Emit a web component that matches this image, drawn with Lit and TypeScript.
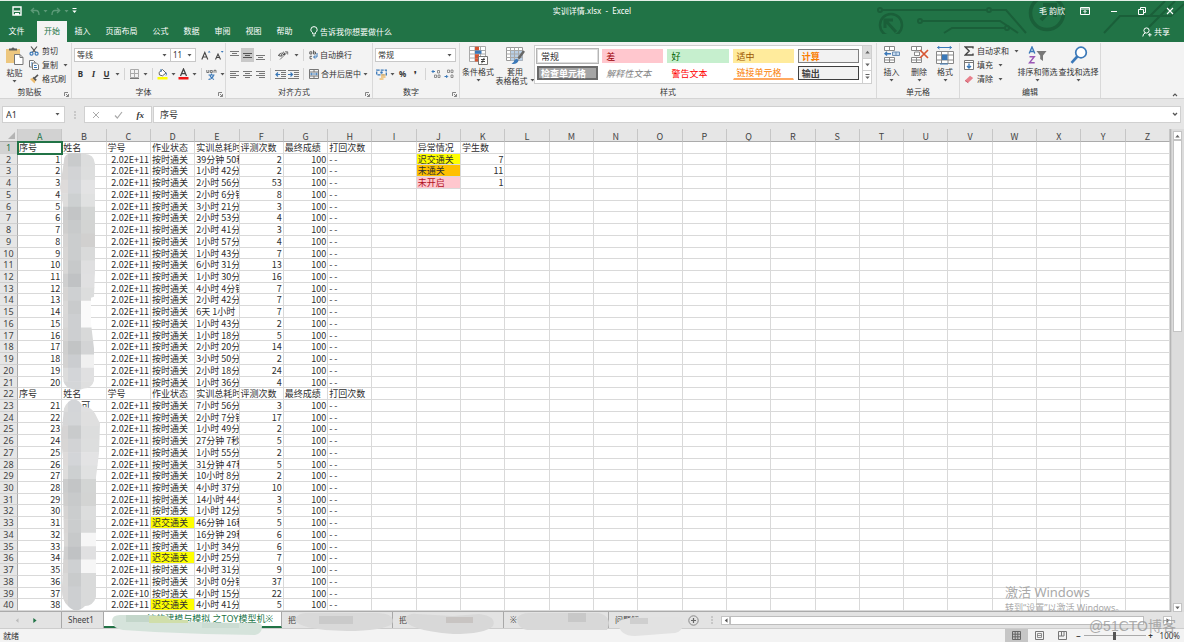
import { LitElement, html, css, svg, nothing, TemplateResult } from "lit";
import { customElement } from "lit/decorators.js";
import { classMap } from "lit/directives/class-map.js";
import { styleMap } from "lit/directives/style-map.js";

const icon = (w: number, h: number, body: unknown) =>
  html`<svg width=${w} height=${h} viewBox="0 0 ${w} ${h}" fill="none" aria-hidden="true">${body}</svg>`;

const caret = html`<svg class="caret" width="5" height="3" viewBox="0 0 5 3" aria-hidden="true"><path d="M.5 0h4l-2 2.4z" fill="#555" /></svg>`;

const lines = (rows: number[][], color = "#777") =>
  svg`${rows.map(([x, y, w]) => svg`<path d="M${x} ${y}.5h${w}" stroke=${color}/>`)}`;

const I = {
  save: icon(10, 10, svg`<path d="M1 1h8v8H1z" stroke="#fff" stroke-width="1.4"/><path d="M2 5.2h6" stroke="#fff" stroke-width="1.4"/><path d="M3 7h4v2H3z" fill="#fff"/>`),
  undo: icon(10, 9, svg`<path d="M4 1 1.3 3.5 4 6M1.5 3.5H6q3 0 3 4.5" stroke="#5c9a78" stroke-width="1.3"/>`),
  redo: icon(10, 9, svg`<path d="M6 1l2.700 2.500L6 6M8.500 3.500H4q-3 0-3 4.500" stroke="#5c9a78" stroke-width="1.3"/>`),
  more: icon(5, 6, svg`<path d="M.5.5h4" stroke="#fff"/><path d="M.3 2.500h4.400L2.500 5z" fill="#fff"/>`),
  display: icon(10, 8, svg`<path d="M.5.500h9v7h-9zM.5 2h9M5 6.500V3.500M3.500 5 5 3.500 6.500 5" stroke="#fff"/>`),
  min: icon(8, 8, svg`<path d="M1 4.500h6" stroke="#fff"/>`),
  restore: icon(8, 8, svg`<path d="M.5 2.500h5v5h-5zM2.500 2.500v-2h5v5h-2" stroke="#fff"/>`),
  close: icon(8, 8, svg`<path d="M1 1l6 6M7 1 1 7" stroke="#fff" stroke-width="1.1"/>`),
  bulb: icon(8, 11, svg`<path d="M2.700 8V6.700Q.8 5.500.8 3.800a3.200 3.200 0 0 1 6.400 0Q7.200 5.500 5.300 6.700V8zM2.800 9.800h2.400" stroke="#fff"/>`),
  person: icon(10, 10, svg`<circle cx="4.500" cy="3.500" r="2.600" stroke="#fff"/><path d="M.8 9.500q.2-3 2.600-3.600M6 7.800h3.600M7.800 6v3.600" stroke="#fff"/>`),
  paste: icon(19, 20, svg`<path d="M1 3h14v14H1z" fill="#edc77f"/><path d="M4 4.500V2.500h2.500a1.600 1.600 0 0 1 3 0H12v2z" fill="#5e5e5e"/><path d="M9.500 8.500h5.500l3 3v7h-8.500z" fill="#fff" stroke="#777"/><path d="M15 8.500v3h3" stroke="#777"/>`),
  cut: icon(10, 10, svg`<path d="M2 .5 6.800 6.600M8 .5 3.200 6.600" stroke="#555" stroke-width="1.200"/><circle cx="2.500" cy="7.700" r="1.500" stroke="#3a78b8" stroke-width="1.200"/><circle cx="7.600" cy="7.700" r="1.500" stroke="#3a78b8" stroke-width="1.200"/>`),
  copy: icon(10, 10, svg`<path d="M.5.500h4l1.500 1.500v5H.5z" fill="#fff" stroke="#777"/><path d="M3.500 3h4L9.500 5v4.500h-6z" fill="#fff" stroke="#777"/><path d="M2 3h1.500M2 5h1M5 5.500h2.500M5 7.500h3" stroke="#3a78b8"/>`),
  brush: icon(10, 10, svg`<path d="M1 5 4.500 3.500 7 6 5.500 9.500z" fill="#edbd70"/><path d="M5 4.500 9 .8M4.200 3.400l3 3" stroke="#555" stroke-width="1.700"/>`),
  grow: icon(10, 11, svg`<path d="M.8 9.500 3.800 2.500 6.800 9.500M1.900 7h3.800" stroke="#444" stroke-width="1.100"/><path d="M6.800 2.500 8.200.8 9.600 2.500z" fill="#3a78b8"/>`),
  shrink: icon(10, 11, svg`<path d="M1.500 9.500 4 4 6.500 9.500M2.500 7.500h3" stroke="#444" stroke-width="1.100"/><path d="M6.800 1 8.200 2.700 9.600 1z" fill="#3a78b8"/>`),
  border: icon(9, 10, svg`<path d="M.5.500h8v8h-8zM4.500.500v8M.5 4.500h8" stroke="#aaa"/><path d="M0 9.500h9" stroke="#777"/>`),
  fill: icon(11, 12, svg`<path d="M2 4.500 5.500 1.500 9 5 5.500 7.800 2.500 7z" fill="#fff" stroke="#666"/><path d="M4 1v3M9 4.500q1 2 0 3" stroke="#3a78b8"/><path d="M.5 9h10v2.500H.5z" fill="#ff0"/>`),
  color: icon(11, 12, svg`<path d="M2.500 8 5.500 1 8.500 8M3.500 5.700h4" stroke="#444" stroke-width="1.300"/><path d="M.5 9h10v2.500H.5z" fill="#f01414"/>`),
  wen: icon(11, 11, svg`<path d="M.8 1v2.500h2V1M4.300 1.500h2v2h-2zM8 3.800V1.300h2v2.500" stroke="#555" stroke-width=".8"/><path d="M5.500 4.500v1.500M2.500 6h6M4 6.500q1 3 4 4M7.500 6.500q-1 3-5 4" stroke="#3a78b8" stroke-width="1.100"/>`),
  top: icon(9, 9, lines([[0, 0, 9], [2, 2, 5], [0, 4, 9]])),
  middle: icon(9, 9, lines([[0, 2, 9], [2, 4, 5], [0, 6, 9]], "#555")),
  bottom: icon(9, 9, lines([[0, 4, 9], [2, 6, 5], [0, 8, 9]])),
  left: icon(9, 9, lines([[0, 1, 9], [0, 3, 6], [0, 5, 9], [0, 7, 6]])),
  center: icon(9, 9, lines([[0, 1, 9], [2, 3, 5], [0, 5, 9], [2, 7, 5]])),
  right: icon(9, 9, lines([[0, 1, 9], [3, 3, 6], [0, 5, 9], [3, 7, 6]])),
  orient: icon(11, 10, svg`<path d="M2 9.500 9.500 2M7 1.800h2.700v2.700" stroke="#777"/><path d="M1 4.500q2-2 3 0t-2 1.500-1-1.500M4 2.500l2 2.500q1.500-.5.500-2T4.800 2.800" stroke="#444"/>`),
  outdent: icon(11, 9, svg`${lines([[0, 0, 11], [6, 2, 5], [6, 4, 5], [6, 6, 5], [0, 8, 11]])}<path d="M5 4.500H1.500M3 2.500l-2 2 2 2" stroke="#3a78b8" stroke-width="1.200"/>`),
  indent: icon(11, 9, svg`${lines([[0, 0, 11], [6, 2, 5], [6, 4, 5], [6, 6, 5], [0, 8, 11]])}<path d="M0 4.500h4M2.500 2.500l2 2-2 2" stroke="#3a78b8" stroke-width="1.200"/>`),
  wrap: icon(9, 10, svg`<path d="M.8 4V1.800h2V4h-2M4.500.3V4h2V2h-2M3 6.300H1v2.500h2" stroke="#555" stroke-width=".9"/><path d="M8 3v4H4.800M6.200 5.300 4.600 7l1.600 1.700" stroke="#3a78b8"/>`),
  merge: icon(10, 10, svg`<path d="M.5.500h9v9h-9zM.5 3h9M.5 7h9M5 .5V3M5 7v2.500" stroke="#777"/><path d="M1.500 5h7M3 3.800 1.700 5 3 6.200M7 3.800 8.300 5 7 6.200" stroke="#3a78b8" stroke-width=".9"/>`),
  money: icon(11, 11, svg`<path d="M.7 1.200h9.600v4.600H.7z" stroke="#3a78b8" stroke-width="1.300" stroke-dasharray="3 1"/><circle cx="5.500" cy="3.500" r="1.200" fill="#3a78b8"/><path d="M5 6h4.500M5 8h4.500M3.500 10h4" stroke="#edbd70" stroke-width="1.500"/>`),
  decInc: icon(10, 10, svg`<path d="M4 2.500H1M2.500 1 1 2.500 2.500 4" stroke="#3a78b8"/><path d="M6.500 1.500h2v2.500h-2zM3.500 6h2v2.500h-2zM7 6h2v2.500H7z" stroke="#777" stroke-width=".8"/>`),
  decDec: icon(10, 10, svg`<path d="M.5 7.500h3M2.200 6l1.500 1.500L2.200 9" stroke="#3a78b8"/><path d="M3.500 1h2v2.500h-2zM7 1h2v2.500H7zM7 6h2v2.500H7z" stroke="#777" stroke-width=".8"/>`),
  cond: icon(20, 19, svg`<path d="M1.500.500h16v15h-16zM1.500 4.500h16M1.500 8h16M1.500 12h16M7 .5v15M12.500.5v15" fill="#fff" stroke="#aaa"/><path d="M7 .8h4v3.500H7zM7 8.200h4V12H7zM7 12.200h3v3.300H7z" fill="#d65532"/><path d="M7 4.600h6.500v3.200H7z" fill="#3a78b8"/><path d="M10.500 10.500h9v8h-9z" fill="#fff" stroke="#777"/><path d="M13 13.500h4M13 15.500h4M16.200 11.800l-2.500 5.500" stroke="#333" stroke-width=".9"/>`),
  format: icon(19, 19, svg`<path d="M.5 1.500h16v13H.5z" fill="#fff" stroke="#999"/><path d="M5 5h11.500v9.500H5z" fill="#b9cfe6"/><path d="M.5 4.500h16M.5 8h16M.5 11.500h16M4.500 1.500v13M8.500 1.500v13M12.500 1.500v13" stroke="#a9a9a9"/><path d="M18 5 12.500 12.500" stroke="#666" stroke-width="2.500"/><path d="M5.500 17.800Q8 17 8.500 14q2.500-2 4 .5Q11.500 18.500 5.500 17.800z" fill="#3a78b8"/>`),
  insert: icon(18, 19, svg`<path d="M1.500.500h10v4h-10zM6.500.500v4M1.500 11.500h10v5h-10zM1.500 14h10M6.500 11.500v5" fill="#fff" stroke="#888"/><path d="M9.500 6h7v3.500h-7zM13 6v3.500" fill="#c8dcf0" stroke="#6a8db3"/><path d="M8 7.700H2M4 5.800 2 7.700l2 1.900" stroke="#3a78b8" stroke-width="1.400"/>`),
  remove: icon(19, 19, svg`<path d="M1.500.500h10v4h-10zM6.500.500v4M1.500 11.500h10v5h-10zM1.500 14h10M6.500 11.500v5M4.500 6h5v3.500h-5z" fill="#fff" stroke="#888"/><path d="M10 4l8 8M18 4l-8 8" stroke="#d65532" stroke-width="1.700"/>`),
  cells: icon(18, 19, svg`<path d="M1.500 1.500h14M3.500 0 1.500 1.500l2 1.500M13.500 0l2 1.500-2 1.500" stroke="#3a78b8"/><path d="M.5 5.500h17v12H.5zM.5 9h17M.5 14h17M5.500 5.500v12M12 5.500v12" fill="#fff" stroke="#888"/><path d="M6 8.500h5.500v5.500H6z" fill="#3a78b8"/><path d="M4 18h8" stroke="#3a78b8"/>`),
  sum: icon(10, 10, svg`<path d="M9 2.500V1H1.200l4 4-4 4H9V7.500" stroke="#444" stroke-width="1.400"/>`),
  down: icon(10, 10, svg`<path d="M.5.500h9v9h-9zM.5 2.500h9" fill="#fff" stroke="#777"/><path d="M5 3.500v4.500M3 6l2 2 2-2" stroke="#3a78b8" stroke-width="1.400"/>`),
  eraser: icon(10, 9, svg`<path d="M1 5.500 6 .8 9.200 3 4.200 7.800z" fill="#e8808c"/><path d="M1 5.500l3.200 2.300" stroke="#c95c6c"/>`),
  sort: icon(20, 19, svg`<path d="M1.200 7.500 4 1 6.800 7.500M2 5.500h4" stroke="#3a78b8" stroke-width="1.400"/><path d="M1.500 10.800h4.800l-4.800 6h5.200" stroke="#9a57b5" stroke-width="1.400"/><path d="M8.500 5h10L15 9.500v5.500l-2.800-2V9.500z" fill="#777"/>`),
  search: icon(18, 19, svg`<circle cx="11" cy="6.500" r="5.300" fill="#fff" stroke="#3a78b8" stroke-width="1.700"/><path d="M7.300 10.500 1.500 16.800" stroke="#3a78b8" stroke-width="2.600"/>`),
  launcher: icon(5, 5, svg`<path d="M.5 4V.500H4M2 2l2.300 2.300M4.500 2v2.500H2" stroke="#777" stroke-width=".9"/>`),
  x: icon(8, 8, svg`<path d="M1 1l6 6M7 1 1 7" stroke="#aaa"/>`),
  check: icon(9, 8, svg`<path d="M1 4.500 3.300 7 8 1" stroke="#aaa" stroke-width="1.200"/>`),
  chevDown: icon(6, 5, svg`<path d="M1 1l2 2 2-2" stroke="#555" stroke-width="1.300"/>`),
  chevUp: icon(6, 5, svg`<path d="M1 4l2-2 2 2" stroke="#555" stroke-width="1.100"/>`),
  arrowUp: icon(5, 4, svg`<path d="M.3 3.500h4.400L2.500.800z" fill="#666"/>`),
  arrowDown: icon(5, 4, svg`<path d="M.3.500h4.400L2.500 3.200z" fill="#666"/>`),
  moreDown: icon(5, 6, svg`<path d="M.5.500h4" stroke="#666"/><path d="M.3 2.500h4.400L2.500 5z" fill="#666"/>`),
  arrowLeft: icon(4, 5, svg`<path d="M3.500.300v4.400L.8 2.500z" fill="#555"/>`),
  arrowRight: icon(4, 5, svg`<path d="M.5.300v4.400L3.200 2.500z" fill="#555"/>`),
  prevSheet: icon(4, 5, svg`<path d="M3.500.300v4.400L.8 2.500z" fill="#bbb"/>`),
  nextSheet: icon(4, 5, svg`<path d="M.3 0v5L3.600 2.500z" fill="#217346"/>`),
  dots: icon(2, 8, svg`<path d="M1 0v2M1 3v2M1 6v2" stroke="#aaa"/>`),
  add: icon(11, 11, svg`<circle cx="5.500" cy="5.500" r="4.700" stroke="#888"/><path d="M3 5.500h5M5.500 3v5" stroke="#666" stroke-width="1.200"/>`),
  normal: icon(9, 9, svg`<path d="M.5.500h8v8h-8zM.5 3.200h8M.5 5.800h8M3.200.5v8M5.800.5v8" stroke="#666"/>`),
  pageView: icon(9, 9, svg`<path d="M.5.500h8v8h-8z" stroke="#777"/><path d="M2.500 2.500h4v4h-4zM2.500 4.500h4" stroke="#777" stroke-width=".8"/>`),
  breakView: icon(9, 9, svg`<path d="M.5.500h8v8h-8zM3.500.500v4.500M6 .5v4.500M.5 5h5.500" stroke="#777"/>`),
};

const HEAD = ["序号", "姓名", "学号", "作业状态", "实训总耗时", "评测次数", "最终成绩", "打回次数"];
const RECORDS: [string, number][] = [
  ["39分钟 50秒", 2], ["1小时 42分钟", 2], ["2小时 56分钟", 53], ["2小时 6分钟", 8], ["3小时 21分钟", 3],
  ["2小时 53分钟", 4], ["2小时 41分钟", 3], ["1小时 57分钟", 4], ["1小时 43分钟", 7], ["6小时 31分钟", 13],
  ["1小时 30分钟", 16], ["4小时 4分钟", 7], ["2小时 42分钟", 7], ["6天 1小时", 7], ["1小时 43分钟", 2],
  ["1小时 18分钟", 5], ["2小时 20分钟", 14], ["3小时 50分钟", 2], ["2小时 18分钟", 24], ["1小时 36分钟", 4],
  ["7小时 56分钟", 3], ["2小时 7分钟", 17], ["1小时 49分钟", 2], ["27分钟 7秒", 5], ["1小时 55分钟", 2],
  ["31分钟 47秒", 5], ["10小时 8分钟", 2], ["4小时 37分钟", 10], ["14小时 44分钟", 3], ["1小时 12分钟", 5],
  ["46分钟 16秒", 5], ["16分钟 29秒", 6], ["1小时 34分钟", 6], ["2小时 25分钟", 7], ["4小时 31分钟", 9],
  ["3小时 0分钟", 37], ["4小时 15分钟", 22], ["4小时 41分钟", 5],
];
const LATE = new Set([31, 34, 38]);
const SUMMARY: Record<number, [string, string, string]> = {
  1: ["异常情况", "学生数", ""],
  2: ["迟交通关", "7", "late"],
  3: ["未通关", "11", "failed"],
  4: ["未开启", "1", "unopened"],
};
const COLUMNS = "ABCDEFGHIJKLMNOPQRSTUVWXYZ".split("");

type Cell = { text: string; cls?: string };

function rowCells(row: number): Cell[] {
  const cells: Cell[] = COLUMNS.map(() => ({ text: "" }));
  if (row === 1 || row === 22) {
    HEAD.forEach((text, i) => (cells[i] = { text }));
  } else {
    const n = row < 22 ? row - 1 : row - 2;
    const [time, tries] = RECORDS[n - 1];
    cells[0] = { text: String(n), cls: "num" };
    cells[1] = { text: n === 21 ? "\u3000\u3000可" : "" };
    cells[2] = { text: n === 37 ? "2.02E+10" : "2.02E+11", cls: "num" };
    cells[3] = LATE.has(n) ? { text: "迟交通关", cls: "late" } : { text: "按时通关" };
    cells[4] = { text: time };
    cells[5] = { text: String(tries), cls: "num" };
    cells[6] = { text: "100", cls: "num" };
    cells[7] = { text: "- -" };
  }
  const s = SUMMARY[row];
  if (s) {
    cells[9] = { text: s[0], cls: s[2] };
    cells[10] = { text: s[1], cls: row > 1 ? "num" : "" };
  }
  if (row === 1) cells[0].cls = "active";
  return cells;
}

/* Shade triples per mosaic row: left edge, middle, right */
const SHADES: string[][] = [
  ["#d6d4d4", "#c9cbcc", "#dcdddd"], ["#d8d6d5", "#d2d3d5", "#dddede"], ["#dedbda", "#d3d5d8", "#e3e3e4"],
  ["#dedddc", "#cdd0d1", "#e0e1e1"], ["#cbcccc", "#c3c5c6", "#d3d5d4"], ["#cfcecd", "#c8cacb", "#d3d4d3"],
  ["#d6d4d3", "#cbcdce", "#d1d0cf"], ["#d8d6d5", "#cbcdce", "#d9dada"], ["#d9d8d7", "#c7c9ca", "#dfdfe0"],
  ["#cfcfcf", "#c0c2c4", "#e0e0e1"], ["#d6d4d3", "#ced0d2", "#dcdddd"], ["#dad9d8", "#c9cbcc", "#fafafa"],
  ["#d9d8d8", "#cdcfd1", "#fafafa"], ["#d6d5d4", "#cdcfd1", "#d8d9d9"], ["#cfcfce", "#c2c4c5", "#d3d4d5"],
  ["#d3d2d1", "#cbcdd0", "#f0f0f0"], ["#dcdcdc", "#d3d5d8", "#e0e0e1"], ["#d6d6d7", "#d4d6d8", "#dfdfdf"],
];

@customElement("app-root")
export class AppRoot extends LitElement {
  static styles = css`
    :host { display: flex; flex-direction: column; height: 100vh; overflow: hidden; position: relative; background: #e6e6e6; color: #333;
      font-family: "Noto Sans", "Noto Sans CJK SC", sans-serif; font-size: 8px; line-height: 10px; }
    * { box-sizing: border-box; }
    svg { display: block; flex: none; }
    button, select, input { font: inherit; color: inherit; border: 0; margin: 0; padding: 0; background: none; border-radius: 0; }
    button, a { display: flex; align-items: center; justify-content: center; white-space: nowrap; text-decoration: none; color: inherit; flex: none; }
    .top { position: relative; background: #217346; color: #fff; border-top: 1px solid #e4efe8; flex: none; }
    .circuit { position: absolute; right: 0; top: 0; }
    .titlebar { position: relative; display: grid; grid-template-columns: 1fr auto 1fr; height: 20px; align-items: center; }
    .quick { display: flex; align-items: center; gap: 5px; padding-left: 12px; }
    .quick .save { margin-right: 3px; }
    .quick .caret { margin: 0 -2px; }
    .quick .caret path { fill: #5c9a78; }
    .window { display: flex; justify-content: flex-end; align-items: center; padding-right: 10px; gap: 20px; }
    .window .user { margin-right: -5px; }
    .tabs { position: relative; display: flex; height: 21px; align-items: stretch; }
    .tabs a { width: 31px; padding-bottom: 1px; }
    .tabs a.file { width: 37px; padding-right: 4px; }
    .tabs a.on { background: #f3f3f3; color: #217346; width: 30px; }
    .tabs a.wide { width: 47px; }
    .tabs nav { display: flex; }
    .tabs .tip { gap: 2px; margin-left: 10px; }
    .tabs .share { margin-left: auto; padding: 0 14px 0 0; gap: 2px; }

    .ribbon { display: flex; flex: none; height: 57px; background: #f3f3f3; border-bottom: 1px solid #d4d4d4; padding-top: 1px; }
    .group { display: flex; flex-direction: column; position: relative; flex: none; border-right: 1px solid #d9d9d9; }
    .group .body { display: flex; flex: 1; min-height: 0; padding-top: 1px; }
    .group .name { display: flex; flex: none; height: 12px; align-items: center; justify-content: center; padding-bottom: 1px; }
    .group .launch { position: absolute; right: 2px; bottom: 1px; }
    .g1 { width: 72px; } .g1 .name { padding-right: 12px; } .g2 { width: 154px; } .g2 .name { padding-right: 10px; } .g3 { width: 147px; } .g3 .name { padding-right: 10px; } .g4 { width: 87px; } .g4 .name { padding-right: 10px; }
    .g5 { width: 417px; } .g6 { width: 83px; } .g7 { width: 141px; }
    .big { flex-direction: column; justify-content: flex-start; line-height: 9px; padding-top: 2px; }
    .big svg { margin-bottom: 2px; }
    .big .caret { margin: 3px 0 0; }
    .big .pair { display: flex; align-items: center; gap: 2px; }
    .big .pair .caret { margin: 0; }
    .stack { display: flex; flex-direction: column; }
    .stack button { height: 14px; justify-content: flex-start; gap: 3px; }
    .stack .caret { margin-left: 2px; }
    .rows { display: flex; flex-direction: column; gap: 5px; padding: 4px 0 0 2px; }
    .line { display: flex; height: 14px; align-items: center; }
    .line button { height: 14px; min-width: 13px; }
    .line button.drop { min-width: 8px; }
    .line button.slant { min-width: 18px; }
    .line button.t { gap: 2px; min-width: 53px; justify-content: flex-start; padding-left: 2px; }
    .line button.on { background: #c9c9c9; }
    .line i { width: 1px; height: 12px; background: #d4d4d4; margin: 0 3px; }
    .pick { display: flex; align-items: center; position: relative; height: 14px; background: #fff; border: 1px solid #c8c8c8; }
    .pick select { appearance: none; width: 100%; height: 12px; padding: 0 2px; line-height: 12px; outline: 0; }
    .pick .caret { position: absolute; right: 3px; }
    .family { width: 97px; } .size { width: 25px; border-left: 0; margin-right: 3px; }
    .numfmt { width: 81px; }
    .b { font-weight: 700; } .it { font-style: italic; font-family: "Liberation Serif", serif; font-weight: 700; font-size: 9px; } .u { text-decoration: underline; font-weight: 700; }
    .gallery { display: flex; flex: 1; height: 39px; border: 1px solid #cfcfcf; background: #fff; margin: 1px 4px 0 0; }
    .swatches { display: grid; grid-template-columns: repeat(5, minmax(0, 1fr)); grid-template-rows: 14px 14px; gap: 3px 4px; padding: 3px 3px 0 2px; flex: 1; }
    .swatches button { justify-content: flex-start; font-size: 9px; padding: 0 3px; border: 1px solid transparent; line-height: 11px; height: 14px; }
    .swatches .s0 { outline: 1px solid #b5b5b5; border-color: #ddd; }
    .swatches .s1 { background: #ffc7ce; color: #9c0006; }
    .swatches .s2 { background: #c6efce; color: #006100; }
    .swatches .s3 { background: #ffeb9c; color: #9c5700; }
    .swatches .s4 { background: #f2f2f2; color: #fa7d00; border-color: #7f7f7f; font-weight: 700; }
    .swatches .s5 { background: #a5a5a5; color: #fff; border: 2px solid #6a6a6a; font-weight: 700; padding: 0 2px; }
    .swatches .s6 { color: #7f7f7f; font-style: italic; }
    .swatches .s7 { color: #ff0000; }
    .swatches .s8 { color: #fa7d00; border-bottom: 2px solid #ffa860; }
    .swatches .s9 { background: #f2f2f2; color: #3f3f3f; border-color: #3f3f3f; font-weight: 700; }
    .gscroll { display: flex; flex-direction: column; width: 9px; border-left: 1px solid #cfcfcf; }
    .gscroll button { flex: 1; border-bottom: 1px solid #cfcfcf; }
    .gscroll button:first-child { background: #ddd; }
    .gscroll button:last-child { border-bottom: 0; }
    .rest { flex: 1; display: flex; align-items: flex-end; justify-content: flex-end; padding: 0 6px 1px 0; }

    .formula { display: flex; flex: none; height: 30px; padding: 7px 3px 6px 2px; }
    .formula > * { height: 17px; }
    .box { display: flex; align-items: center; background: #fff; border: 1px solid #d0d0d0; position: relative; }
    .box input { width: 100%; height: 15px; padding: 0 3px; font-size: 9px; outline: 0; }
    .namebox { width: 63px; } .namebox .caret { position: absolute; right: 4px; }
    .grip { display: flex; align-items: center; justify-content: center; width: 19px; }
    .fx { width: 68px; justify-content: space-around; margin-right: 1px; }
    .fx .f { font: italic 700 9px "Liberation Serif", serif; }
    .entry { flex: 1; } .entry input { padding: 0 6px; } .entry button { width: 10px; }

    .sheet { display: flex; flex: 1; min-height: 0; }
    .canvas { position: relative; flex: 1; min-width: 0; height: 100%; }
    table { display: grid; height: 100%; grid-template-columns: 18px repeat(26, minmax(0, 1fr)); grid-template-rows: 13px repeat(40, minmax(0, 1fr));
      background: #fff; font: 9px "Noto Sans CJK SC", sans-serif; color: #2e2e2e; border-right: 1px solid #b5b5b5; border-bottom: 1px solid #ababab; overflow: hidden; }
    thead, tbody, tr { display: contents; }
    th { font-weight: 400; padding: 0; background: #e6e6e6; color: #444; border-right: 1px solid #c6c6c6; border-bottom: 1px solid #ababab; line-height: 15px; overflow: hidden; }
    tbody th { border-right: 1px solid #ababab; border-bottom: 1px solid #d0d0d0; line-height: 12px; font-family: "Noto Sans", sans-serif; }
    th.sel { background: #d2d2d2; color: #217346; }
    .corner { display: flex; justify-content: flex-end; align-items: flex-end; padding: 0 2px 2px 0; }
    td { padding: 0 1px; border-right: 1px solid #d9d9d9; border-bottom: 1px solid #d9d9d9; white-space: pre; overflow: hidden; min-width: 0; line-height: 12px; }
    td.num { text-align: right; }
    td.late { background: #ff0; } td.failed { background: #ffc000; } td.unopened { background: #ffc7ce; color: #b0101c; }
    td.active { outline: 2px solid #217346; outline-offset: -1px; z-index: 1; border-color: transparent; }
    .mask { position: absolute; left: 60px; top: 0; height: 100%; width: 44px; z-index: 2; }
    .vscroll { display: flex; flex-direction: column; width: 13px; padding: 2px 2px 0; background: linear-gradient(90deg, #cfcfcf 1px, #dcdcdc 1px); }
    .vscroll button, .hscroll button { width: 9px; height: 9px; background: #fff; border: 1px solid #c4c4c4; }
    .vscroll .thumb { flex: 0 1 192px; width: 9px; background: #fff; border: 1px solid #c4c4c4; }
    .vscroll .down { margin-top: auto; }

    .sheets { display: flex; position: relative; flex: none; height: 17px; background: #e3e3e3; border-bottom: 1px solid #cdcdcd; }
    .sheets a { border-right: 1px solid #a8a8a8; justify-content: flex-start; padding-left: 6px; overflow: hidden; color: #444; }
    .sheets .step { display: flex; width: 62px; align-items: center; gap: 14px; padding-left: 15px; border-right: 1px solid #a8a8a8; }
    .sheets .t1 { width: 42px; font-size: 8px; } .sheets .t2 { width: 178px; background: #fff; color: #217346; border-bottom: 2px solid #217346; justify-content: flex-end; padding-right: 8px; font-size: 9px; }
    .sheets .t3, .sheets .t4 { width: 111px; } .sheets .t5 { width: 105px; } .sheets .t6 { width: 70px; border: 0; }
    .sheets .plus { width: 28px; } .sheets .grip { width: 9px; }
    .cover { position: absolute; left: 105px; top: 0; z-index: 2; }
    .hscroll { display: flex; flex: 1; align-items: center; padding: 0 12px 0 5px; }
    .hscroll .thumb { flex: 1; height: 9px; background: #fff; border: 1px solid #bdbdbd; margin-right: 19px; }
    .status { display: flex; flex: none; height: 13px; align-items: center; background: #f3f3f3; padding: 0 4px 0 3px; }
    .views { display: flex; height: 13px; margin-left: auto; } .views button { width: 23px; } .views .on { background: #c6c6c6; }
    .zoom { display: flex; align-items: center; gap: 2px; margin-left: 2px; }
    .zoom button { width: 6px; font-weight: 700; }
    .zoom input { appearance: none; width: 62px; height: 9px; background: linear-gradient(#aaa, #aaa) center / 100% 1px no-repeat; }
    .zoom input::-webkit-slider-thumb { appearance: none; width: 3px; height: 8px; background: #555; }
    .zoom output { margin-left: 4px; }
    .activate { position: absolute; right: 55px; bottom: 28px; width: 124px; color: #a9a9a9; font-size: 9px; line-height: 13px; pointer-events: none; white-space: nowrap; z-index: 3; }
    .activate strong { display: block; font-weight: 400; font-size: 13px; line-height: 17px; }
    .credit { position: absolute; right: 8px; bottom: 6px; color: #999; opacity: .8; font: 14px "Liberation Sans", "Noto Sans CJK SC", sans-serif; line-height: 20px; pointer-events: none; z-index: 3; }
  `;

  private btn(label: string, content: unknown, cls = "") {
    return html`<button type="button" class=${cls} aria-label=${label} title=${label}>${content}</button>`;
  }
  private drop(label: string) {
    return this.btn(label, caret, "drop");
  }
  private group(cls: string, name: string, body: TemplateResult, launcher = true) {
    return html`<section class="group ${cls}" aria-label=${name}>
      <div class="body">${body}</div><div class="name">${name}</div>
      ${launcher ? html`<button type="button" class="launch" aria-label="${name}设置">${I.launcher}</button>` : nothing}
    </section>`;
  }
  private big(ic: unknown, text: string, width: number) {
    return html`<button type="button" class="big" style=${styleMap({ width: `${width}px` })}>${ic}<span>${text}</span>${caret}</button>`;
  }

  private header() {
    return html`<header class="top">
      <svg class="circuit" width="310" height="33" viewBox="0 0 310 33" fill="none" stroke="#1a5f39" stroke-width="2" aria-hidden="true">
        <circle cx="17" cy="24" r="11" stroke-width="2.500"/><path d="M22 31 12 20M11 27v-8h8" stroke-width="3"/>
        <circle cx="6" cy="9" r="2"/><path d="M8 9h104M118 9h14l20 23"/><circle cx="115" cy="9" r="2"/>
        <circle cx="46" cy="20" r="2"/><path d="M48 20h78l18 12"/><path d="M70 32l8-5h52"/><circle cx="133" cy="27" r="2"/>
        <circle cx="173" cy="12" r="16.500" stroke-width="3.500"/><path d="M167 19 180 5M169 4h12v12" stroke-width="4"/>
        <path d="M230 32l16-17h30l15-15M275 26l26-26M245 15h52l13-12"/>
      </svg>
      <div class="titlebar">
        <div class="quick">
          ${this.btn("保存", I.save, "save")}${this.btn("撤消", I.undo)}${caret}${this.btn("恢复", I.redo)}${caret}${this.btn("自定义", I.more)}
        </div>
        <div>实训详情.xlsx&nbsp; -&nbsp; Excel</div>
        <div class="window"><span class="user">毛 韵欣</span>${this.btn("功能区显示选项", I.display)}${this.btn("最小化", I.min)}${this.btn("还原", I.restore)}${this.btn("关闭", I.close)}</div>
      </div>
      <div class="tabs">
        <nav>
          ${["文件", "开始", "插入", "页面布局", "公式", "数据", "审阅", "视图", "帮助"].map((t, i) =>
            html`<a href="#" class=${classMap({ file: i === 0, on: i === 1, wide: i === 3 })}>${t}</a>`)}
        </nav>
        <button type="button" class="tip">${I.bulb}告诉我你想要做什么</button>
        <button type="button" class="share">${I.person}共享</button>
      </div>
    </header>`;
  }

  private ribbon() {
    const styles = ["常规", "差", "好", "适中", "计算", "检查单元格", "解释性文本", "警告文本", "链接单元格", "输出"];
    return html`<div class="ribbon">
      ${this.group("g1", "剪贴板", html`${this.big(I.paste, "粘贴", 29)}
        <div class="stack"><button type="button">${I.cut}剪切</button><button type="button">${I.copy}复制${caret}</button><button type="button">${I.brush}格式刷</button></div>`)}
      ${this.group("g2", "字体", html`<div class="rows">
        <div class="line">
          <label class="pick family"><select aria-label="字体"><option>等线</option></select>${caret}</label>
          <label class="pick size"><select aria-label="字号"><option>11</option></select>${caret}</label>
          ${this.btn("增大字号", I.grow)}${this.btn("减小字号", I.shrink)}
        </div>
        <div class="line">${this.btn("加粗", "B", "b")}${this.btn("倾斜", "I", "it")}${this.btn("下划线", "U", "u")}${this.drop("下划线样式")}<i></i>
          ${this.btn("边框", I.border)}${this.drop("边框样式")}<i></i>${this.btn("填充颜色", I.fill)}${this.drop("选择填充颜色")}${this.btn("字体颜色", I.color)}${this.drop("选择字体颜色")}<i></i>${this.btn("拼音", I.wen)}${this.drop("拼音选项")}</div>
      </div>`)}
      ${this.group("g3", "对齐方式", html`<div class="rows">
        <div class="line">${this.btn("顶端对齐", I.top)}${this.btn("垂直居中", I.middle, "on")}${this.btn("底端对齐", I.bottom)}<i></i>${this.btn("方向", I.orient, "slant")}${this.drop("方向选项")}<i></i>
          <button type="button" class="t">${I.wrap}自动换行</button></div>
        <div class="line">${this.btn("左对齐", I.left)}${this.btn("居中", I.center)}${this.btn("右对齐", I.right)}<i></i>${this.btn("减少缩进", I.outdent)}${this.btn("增加缩进", I.indent)}<i></i>
          <button type="button" class="t">${I.merge}合并后居中</button>${this.drop("合并选项")}</div>
      </div>`)}
      ${this.group("g4", "数字", html`<div class="rows">
        <div class="line"><label class="pick numfmt"><select aria-label="数字格式"><option>常规</option></select>${caret}</label></div>
        <div class="line">${this.btn("会计格式", I.money)}${this.drop("货币")}${this.btn("百分比", "%", "b")}${this.btn("千位分隔", "❜", "b")}<i></i>${this.btn("增加小数位", I.decInc)}${this.btn("减少小数位", I.decDec)}</div>
      </div>`)}
      ${this.group("g5", "样式", html`${this.big(I.cond, "条件格式", 36)}
        <button type="button" class="big" style=${styleMap({ width: "38px" })}>${I.format}<span>套用</span><span class="pair">表格格式${caret}</span></button>
        <div class="gallery">
          <div class="swatches">${styles.map((s, i) => html`<button type="button" class="s${i}">${s}</button>`)}</div>
          <div class="gscroll">${this.btn("向上", I.arrowUp)}${this.btn("向下", I.arrowDown)}${this.btn("更多样式", I.moreDown)}</div>
        </div>`, false)}
      ${this.group("g6", "单元格", html`${this.big(I.insert, "插入", 29)}${this.big(I.remove, "删除", 26)}${this.big(I.cells, "格式", 26)}`, false)}
      ${this.group("g7", "编辑", html`<div class="stack" style=${styleMap({ width: "57px", paddingLeft: "4px" })}>
          <button type="button">${I.sum}自动求和${caret}</button><button type="button">${I.down}填充${caret}</button><button type="button">${I.eraser}清除${caret}</button></div>
        ${this.big(I.sort, "排序和筛选", 41)}${this.big(I.search, "查找和选择", 41)}`, false)}
      <div class="rest">${this.btn("折叠功能区", I.chevUp)}</div>
    </div>`;
  }

  private mask() {
    const h = 471 / 35;
    const block = (y: number, s: string[]) => svg`<path d="M0 ${y}h8v${h + 0.5}h-8z" fill=${s[0]}/><path d="M8 ${y}h13v${h + 0.5}h-13z" fill=${s[1]}/><path d="M21 ${y}h23v${h + 0.5}h-23z" fill=${s[2]}/>`;
    return html`<svg class="mask" viewBox="0 0 44 484" preserveAspectRatio="none" aria-hidden="true">
      <defs>
        <clipPath id="upper"><path d="M4 32q0-8 9-8 7 0 9 1 12-1 13 10V142l-1 26-3 1v26l3 25v32q-2 8-10 8-6 3-14 0-7-2-7-12V76l-3-18z"/></clipPath>
        <clipPath id="lower"><path d="M4 280q4-9 10-9 5 0 9 7 8 0 12 7l5 10-1 30-3 24v120q-3 9-11 9-9 9-17 0-7-6-6-20l2-40-1-60V330l-2-20z"/></clipPath>
      </defs>
      <g clip-path="url(#upper)">${SHADES.map((s, i) => block(24 + i * h, s))}</g>
      <g clip-path="url(#lower)">${SHADES.slice(0, 17).map((_, i) => {
        const s = SHADES[(i + 16) % 18];
        return block(270 + i * h, i === 10 || i === 12 ? [s[0], s[1], "#f6f6f6"] : i === 8 ? [s[0], s[1], "#dcdddd"] : s[2] === "#fafafa" ? [s[0], s[1], "#d9dada"] : s);
      })}</g>
    </svg>`;
  }

  render() {
    return html`${this.header()}${this.ribbon()}
      <div class="formula">
        <label class="box namebox"><input aria-label="名称框" .value=${"A1"} />${caret}</label>
        <div class="grip">${I.dots}</div>
        <div class="box fx">${this.btn("取消", I.x)}${this.btn("输入", I.check)}${this.btn("插入函数", "fx", "f")}</div>
        <div class="box entry"><input aria-label="编辑栏" .value=${"序号"} />${this.btn("展开编辑栏", I.chevDown)}</div>
      </div>
      <main class="sheet">
        <div class="canvas">
          <table>
            <thead><tr><th class="corner" aria-label="全选">${icon(7, 7, svg`<path d="M7 0v7H0z" fill="#b4b4b4"/>`)}</th>
              ${COLUMNS.map((c, i) => html`<th scope="col" class=${i === 0 ? "sel" : ""}>${c}</th>`)}</tr></thead>
            <tbody>${Array.from({ length: 40 }, (_, i) => i + 1).map((r) => html`<tr><th scope="row" class=${r === 1 ? "sel" : ""}>${r}</th>${rowCells(r).map((c) => html`<td class=${c.cls ?? ""}>${c.text}</td>`)}</tr>`)}</tbody>
          </table>
          ${this.mask()}
        </div>
        <div class="vscroll">${this.btn("向上滚动", I.arrowUp)}<div class="thumb"></div>${this.btn("向下滚动", I.arrowDown, "down")}</div>
      </main>
      <div class="sheets">
        <div class="step">${this.btn("上一个工作表", I.prevSheet)}${this.btn("下一个工作表", I.nextSheet)}</div>
        <a href="#" class="t1">Sheet1</a><a href="#" class="t2">※流的建模与模拟 之TOY模型机※</a>
        <a href="#" class="t3">把</a><a href="#" class="t4">把</a><a href="#" class="t5">※</a><a href="#" class="t6">问题解</a>
        <svg class="cover" width="590" height="26" viewBox="0 0 590 26" aria-hidden="true">
          <path d="M7 9Q7 3 15 3H42L62 4 66 8 90 10 140 11Q157 10 157 14 157 22 150 23L100 22 50 20 18 18Q7 16 7 9z" fill="#d5e3db"/>
          <path d="M21 3h23v7H21z" fill="#c3d6ca"/><path d="M44 4h17l4 4h18v3H44z" fill="#d0deaa"/><path d="M97 11h37v5H97z" fill="#cbdcd2"/>
          <path d="M190 7q4-7 13-6h70q18 1 14 11-10 7-45 7-50-1-52-12z" fill="#d9d9d9"/><path d="M214 4h34v8h-34z" fill="#cacaca"/>
          <path d="M300 6q4-5 12-4l36 2 26-2q18 2 14 12-8 8-40 8-48-4-48-16z" fill="#d8d8d8"/><path d="M341 5h27v6h-27z" fill="#c8c4c2"/>
          <path d="M412 6q4-5 12-5h70q14 4 8 17h-80q-10-2-10-12z" fill="#d8d8d8"/><path d="M463 1h18v9h-18z" fill="#c8c8c8"/>
          <path d="M513 10q6-5 30-5h28q8 1 7 7-1 8-8 9l-40 3q-16 0-17-14z" fill="#e2e2e2"/><path d="M525 6h18v6h-18z" fill="#cfcfcf"/>
        </svg>
        <button type="button" class="plus" aria-label="新工作表">${I.add}</button>
        <div class="grip">${I.dots}</div>
        <div class="hscroll">${this.btn("向左滚动", I.arrowLeft)}<div class="thumb"></div>${this.btn("向右滚动", I.arrowRight)}</div>
      </div>
      <footer class="status"><span>就绪</span>
        <div class="views">${this.btn("普通", I.normal, "on")}${this.btn("页面布局", I.pageView)}${this.btn("分页预览", I.breakView)}</div>
        <div class="zoom">${this.btn("缩小", "−")}<input type="range" min="0" max="100" .value=${"50"} aria-label="缩放" />${this.btn("放大", "+")}<output>100%</output></div>
      </footer>
      <div class="activate"><strong>激活 Windows</strong>转到“设置”以激活 Windows。</div>
      <div class="credit">@51CTO博客</div>`;
  }
}
